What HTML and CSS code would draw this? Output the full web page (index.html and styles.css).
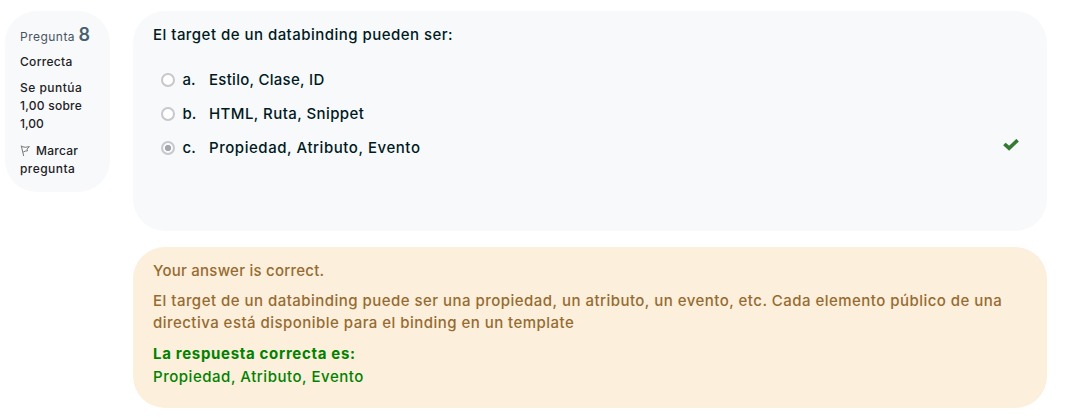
FILE: index.html
```html
<!DOCTYPE html>
<html lang="es">
<head>
<meta charset="utf-8">
<title>Pregunta 8</title>
<link rel="stylesheet" href="styles.css">
</head>
<body>
<main class="question">
  <aside class="info">
    <h3 class="number"><span class="number-label">Pregunta</span> <span class="qno">8</span></h3>
    <p class="state">Correcta</p>
    <p class="grade"><span class="grade-a">Se puntúa</span><br><span class="grade-b">1,00 sobre</span><br><span class="grade-c">1,00</span></p>
    <p class="flag"><svg class="flag-icon" viewBox="0 0 12 14" width="12" height="14"><path d="M1.2 1.5 3.7 12M2 2.6Q5 4 9.4 2.6L7 5.2 7.6 6.8Q5 6.8 3.3 8" fill="none" stroke="#777" stroke-width="1"/></svg><span class="flag-a">Marcar</span><br><span class="flag-b">pregunta</span></p>
  </aside>
  <div class="content">
    <section class="formulation">
      <p class="qtext"><span>El target de un databinding pueden ser:</span></p>
      <ul class="answers">
        <li class="answer"><span class="radio"></span><span class="letter">a.</span><span class="option option-a">Estilo, Clase, ID</span></li>
        <li class="answer"><span class="radio"></span><span class="letter">b.</span><span class="option option-b">HTML, Ruta, Snippet</span></li>
        <li class="answer"><span class="radio checked"></span><span class="letter">c.</span><span class="option option-c">Propiedad, Atributo, Evento</span><svg class="check" viewBox="0 0 16 12" width="16" height="12"><path d="M2.7 6.2 6.1 9.2 13.3 2.4" fill="none" stroke="#357a32" stroke-width="3.6" stroke-linecap="square"/></svg></li>
      </ul>
    </section>
    <section class="feedback">
      <p class="specific"><span>Your answer is correct.</span></p>
      <p class="general"><span class="general-a">El target de un databinding puede ser una propiedad, un atributo, un evento, etc. Cada elemento público de una</span><br><span class="general-b">directiva está disponible para el binding en un template</span></p>
      <p class="right"><strong class="right-title">La respuesta correcta es:</strong><br><span class="right-value">Propiedad, Atributo, Evento</span></p>
    </section>
  </div>
</main>
</body>
</html>
```

FILE: styles.css
```css
* { box-sizing: border-box; }
body {
  margin: 0;
  background: #fff;
  color: #001a1e;
  font: 500 15px/22px Inter, "Open Sans", sans-serif;
}
p, h3, ul { margin: 0; padding: 0; }
.question { display: flex; align-items: flex-start; gap: 23px; padding: 11px 19px 10px 5px; }
.info {
  width: 105px;
  height: 181px;
  padding: 12px 10px 0 15px;
  border-radius: 32px;
  background: #f8f9fb;
  color: #1d2125;
  font-size: 12px;
  line-height: 18px;
  white-space: nowrap;
}
.number { height: 24px; font-size: 12px; font-weight: 400; line-height: 24px; color: #47545f; }
.number-label { letter-spacing: .48px; }
.qno { font-size: 18px; font-weight: 600; color: #47606f; }
.state { margin-top: 6px; letter-spacing: .3px; }
.grade { margin-top: 8px; }
.grade-a { letter-spacing: .48px; }
.grade-b { letter-spacing: .25px; }
.flag { margin-top: 9px; }
.flag-a { letter-spacing: .25px; }
.flag-b { letter-spacing: .45px; }
.flag-icon { margin-right: 4px; vertical-align: -3px; }
.content { flex: 1; }
.formulation { height: 220px; padding: 13px 20px; border-radius: 32px; background: #f8f9fb; }
.qtext { letter-spacing: .47px; }
.answers { margin-top: 17px; padding-left: 8px; list-style: none; }
.answer { display: flex; align-items: center; height: 34px; }
.radio { width: 14px; height: 14px; border: 2px solid #c7c7ce; border-radius: 50%; background: #fff; }
.checked { background: radial-gradient(circle, #a5a5ad 0 2.8px, #f8f9fb 3.4px); }
.letter { width: 27px; margin-left: 7px; padding-left: .6px; }
.option-a { letter-spacing: .28px; }
.option-b { letter-spacing: .42px; }
.option-c { letter-spacing: .55px; }
.check { margin: -6px 8px 0 auto; }
.feedback { height: 161px; margin-top: 16px; padding: 13px 20px; border-radius: 32px; background: #fcefdc; color: #966b31; white-space: nowrap; }
.specific { letter-spacing: .25px; }
.general { margin-top: 8px; }
.general-a { letter-spacing: .472px; }
.general-b { letter-spacing: .465px; }
.right { margin-top: 8px; color: #008200; line-height: 23px; }
.right-title { font-weight: 700; letter-spacing: .68px; }
.right-value { letter-spacing: .53px; }
```
